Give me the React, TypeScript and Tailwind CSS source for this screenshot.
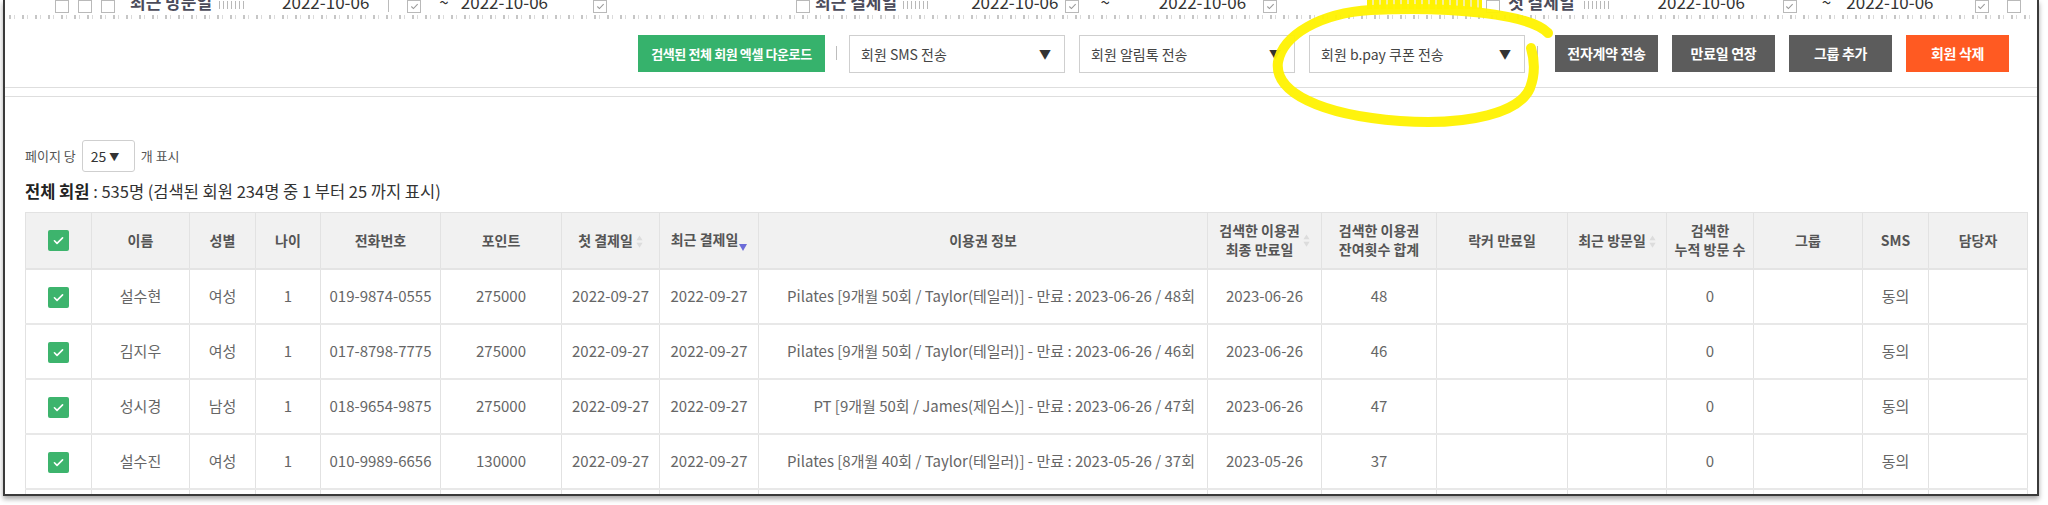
import React from "react";

const FONT = "font-['Noto_Sans_CJK_KR','Noto_Sans',sans-serif]";

function Check() {
  return (
    <span className="inline-flex w-[21px] h-[21px] rounded-[2px] bg-[#3db46d] items-center justify-center align-middle">
      <svg viewBox="0 0 16 16" className="w-[13px] h-[13px]">
        <path d="M3 8.3l3.2 3.2L13 4.7" stroke="white" strokeWidth="2" fill="none" strokeLinecap="round" strokeLinejoin="round" />
      </svg>
    </span>
  );
}

function SortBoth() {
  return (
    <svg viewBox="0 0 8 16" className="inline-block w-[7px] h-[15px] ml-[3px] align-middle">
      <path d="M4 1L7.5 6.5H0.5Z" fill="#dcdcdc" />
      <path d="M4 15L7.5 9.5H0.5Z" fill="#dcdcdc" />
    </svg>
  );
}

function SortDesc() {
  return (
    <svg viewBox="0 0 8 7" className="inline-block w-[8px] h-[7px] ml-[1px] align-[-6px]">
      <path d="M0 0H8L4 7Z" fill="#6b6bd8" />
    </svg>
  );
}

function MiniBox({ ml, check = false }: { ml: string; check?: boolean }) {
  return (
    <div className={`${ml} shrink-0 w-[14px] h-[13px] border border-[#b9b9b9] bg-white flex items-center justify-center`}>
      {check && (
        <svg viewBox="0 0 10 10" className="w-[9px] h-[9px]">
          <path d="M1.5 5l2.3 2.3L8.5 2.3" stroke="#9a9a9a" strokeWidth="1.2" fill="none" />
        </svg>
      )}
    </div>
  );
}

function StripText({ ml, children, bold = false }: { ml: string; children: React.ReactNode; bold?: boolean }) {
  return (
    <div
      className={`${ml} shrink-0 -mt-[8px] h-[20px] leading-[20px] text-[17px] whitespace-nowrap ${
        bold ? "font-bold text-[#4b4b5a]" : "text-[#333]"
      }`}
    >
      {children}
    </div>
  );
}

function Dots({ ml }: { ml: string }) {
  return (
    <div className={`${ml} shrink-0 w-[26px] h-[8px] mt-[1px] bg-[repeating-linear-gradient(90deg,#9a9a9a_0px,#9a9a9a_1px,transparent_1px,transparent_4px)] opacity-70`} />
  );
}

function Strip() {
  return (
    <div className="h-[22px] overflow-hidden flex flex-col">
      <div className="h-[14px] flex items-start">
        <MiniBox ml="ml-[50px]" />
        <MiniBox ml="ml-[9px]" />
        <MiniBox ml="ml-[9px]" />
        <StripText ml="ml-[15px]" bold>최근 방문일</StripText>
        <Dots ml="ml-[7px]" />
        <StripText ml="ml-[37px]">2022-10-06</StripText>
        <div className="ml-[19px] w-[1px] h-[12px] bg-[#bbb]" />
        <MiniBox ml="ml-[18px]" check />
        <StripText ml="ml-[18px]">~</StripText>
        <StripText ml="ml-[12px]">2022-10-06</StripText>
        <MiniBox ml="ml-[45px]" check />
        <MiniBox ml="ml-[189px]" />
        <StripText ml="ml-[5px]" bold>최근 결제일</StripText>
        <Dots ml="ml-[6px]" />
        <StripText ml="ml-[42px]">2022-10-06</StripText>
        <MiniBox ml="ml-[7px]" check />
        <StripText ml="ml-[21px]">~</StripText>
        <StripText ml="ml-[49px]">2022-10-06</StripText>
        <MiniBox ml="ml-[17px]" check />
        <div className="ml-[90px] shrink-0 w-[115px] h-[9px] bg-[repeating-linear-gradient(90deg,#fff200_0px,#fff200_5px,#f6ee9a_5px,#f6ee9a_7px)]" />
        <MiniBox ml="ml-[4px]" />
        <StripText ml="ml-[8px]" bold>첫 결제일</StripText>
        <Dots ml="ml-[9px]" />
        <StripText ml="ml-[48px]">2022-10-06</StripText>
        <MiniBox ml="ml-[38px]" check />
        <StripText ml="ml-[25px]">~</StripText>
        <StripText ml="ml-[15px]">2022-10-06</StripText>
        <MiniBox ml="ml-[41px]" check />
        <MiniBox ml="ml-[18px]" />
      </div>
      <div className="mt-[1px] h-[4px] mx-[4px] bg-[repeating-linear-gradient(90deg,#b8b8b8_0px,#b8b8b8_2px,transparent_2px,transparent_5px,#d2d2d2_5px,#d2d2d2_6px,transparent_6px,transparent_13px)] opacity-80" />
    </div>
  );
}

function SelectBox({ label }: { label: string }) {
  return (
    <div className="w-[216px] h-[38px] border border-[#cfcfcf] bg-white flex items-center justify-between pl-[11px] pr-[13px] text-[14px] text-[#444]">
      <span>{label}</span>
      <span className="text-[12px] text-[#333]">▼</span>
    </div>
  );
}

function DarkBtn({ label }: { label: string }) {
  return (
    <div className="w-[103px] h-[37px] bg-[#5c5c5c] text-white text-[14px] font-bold flex items-center justify-center tracking-[-0.3px]">
      {label}
    </div>
  );
}

function Toolbar() {
  return (
    <div className="h-[66px] border-b border-[#dedede] flex justify-end items-start pt-[13px] pr-[28px]">
      <div className="w-[187px] h-[37px] bg-[#36b26c] text-white text-[13px] font-bold flex items-center justify-center tracking-[-0.4px]">
        검색된 전체 회원 엑셀 다운로드
      </div>
      <div className="ml-[11px] mr-[12px] mt-[11px] w-[1px] h-[14px] bg-[#bdbdbd]" />
      <div className="flex gap-[14px]">
        <SelectBox label="회원 SMS 전송" />
        <SelectBox label="회원 알림톡 전송" />
        <SelectBox label="회원 b.pay 쿠폰 전송" />
      </div>
      <div className="ml-[12px] mr-[17px] mt-[11px] w-[1px] h-[14px] bg-[#bdbdbd]" />
      <div className="flex gap-[14px]">
        <DarkBtn label="전자계약 전송" />
        <DarkBtn label="만료일 연장" />
        <DarkBtn label="그룹 추가" />
        <div className="w-[103px] h-[37px] bg-[#ff5a22] text-white text-[14px] font-bold flex items-center justify-center tracking-[-0.3px]">
          회원 삭제
        </div>
      </div>
    </div>
  );
}

const widths = [66, 98, 66, 65, 120, 121, 98, 99, 449, 114, 115, 131, 99, 87, 109, 66, 99];

type Row = {
  name: string;
  gender: string;
  phone: string;
  point: string;
  ticket: string;
  exp: string;
  remain: string;
};

const rows: Row[] = [
  { name: "설수현", gender: "여성", phone: "019-9874-0555", point: "275000", ticket: "Pilates [9개월 50회 / Taylor(테일러)] - 만료 : 2023-06-26 / 48회", exp: "2023-06-26", remain: "48" },
  { name: "김지우", gender: "여성", phone: "017-8798-7775", point: "275000", ticket: "Pilates [9개월 50회 / Taylor(테일러)] - 만료 : 2023-06-26 / 46회", exp: "2023-06-26", remain: "46" },
  { name: "성시경", gender: "남성", phone: "018-9654-9875", point: "275000", ticket: "PT [9개월 50회 / James(제임스)] - 만료 : 2023-06-26 / 47회", exp: "2023-06-26", remain: "47" },
  { name: "설수진", gender: "여성", phone: "010-9989-6656", point: "130000", ticket: "Pilates [8개월 40회 / Taylor(테일러)] - 만료 : 2023-05-26 / 37회", exp: "2023-05-26", remain: "37" },
  { name: "김민지", gender: "여성", phone: "010-1234-5678", point: "130000", ticket: "Pilates [8개월 40회 / Taylor(테일러)] - 만료 : 2023-05-26 / 37회", exp: "2023-05-26", remain: "37" },
];

function Table() {
  const th = "border border-[#e2e2e2] bg-[#f1f1f1] text-[14px] font-bold text-[#555] leading-[19px] text-center align-middle px-[2px]";
  const td = "border border-[#e2e2e2] h-[55px] text-[15px] text-[#666] text-center align-middle whitespace-nowrap";
  return (
    <table className="table-fixed border-collapse w-[2002px]">
      <colgroup>
        {widths.map((w, i) => (
          <col key={i} style={{ width: w }} />
        ))}
      </colgroup>
      <thead>
        <tr className="h-[56px] border-b-2 border-[#e4e4e4]">
          <th className={th}>
            <Check />
          </th>
          <th className={th}>이름</th>
          <th className={th}>성별</th>
          <th className={th}>나이</th>
          <th className={th}>전화번호</th>
          <th className={th}>포인트</th>
          <th className={th}>
            첫 결제일
            <SortBoth />
          </th>
          <th className={th}>
            최근 결제일
            <SortDesc />
          </th>
          <th className={th}>이용권 정보</th>
          <th className={th}>
            <div className="flex items-center justify-center">
              <div>
                검색한 이용권
                <br />
                최종 만료일
              </div>
              <SortBoth />
            </div>
          </th>
          <th className={th}>
            검색한 이용권
            <br />
            잔여횟수 합계
          </th>
          <th className={th}>락커 만료일</th>
          <th className={th}>
            최근 방문일
            <SortBoth />
          </th>
          <th className={th}>
            검색한
            <br />
            누적 방문 수
          </th>
          <th className={th}>그룹</th>
          <th className={th}>SMS</th>
          <th className={th}>담당자</th>
        </tr>
      </thead>
      <tbody>
        {rows.map((r, i) => (
          <tr key={i} className="border-b-2 border-[#e8e8e8]">
            <td className={td}>
              <Check />
            </td>
            <td className={td}>{r.name}</td>
            <td className={td}>{r.gender}</td>
            <td className={td}>1</td>
            <td className={td}>{r.phone}</td>
            <td className={td}>{r.point}</td>
            <td className={td}>2022-09-27</td>
            <td className={td}>2022-09-27</td>
            <td className={`${td} !text-right pr-[12px]`}>{r.ticket}</td>
            <td className={td}>{r.exp}</td>
            <td className={td}>{r.remain}</td>
            <td className={td}></td>
            <td className={td}></td>
            <td className={td}>0</td>
            <td className={td}></td>
            <td className={td}>동의</td>
            <td className={td}></td>
          </tr>
        ))}
      </tbody>
    </table>
  );
}

function Highlight() {
  return (
    <svg className="absolute left-0 top-0 pointer-events-none" width="2048" height="505" viewBox="0 0 2048 505">
      <path
        d="M1548 33 C1530 14 1450 6 1371 10 C1320 13 1283 35 1278 62 C1274 92 1320 115 1400 121 C1470 126 1520 112 1530 88 C1536 72 1534 58 1531 48"
        stroke="#fff200"
        strokeWidth="10"
        fill="none"
        strokeLinecap="round"
        strokeLinejoin="round"
        opacity="0.95"
      />
    </svg>
  );
}

export default function App() {
  return (
    <div className={`relative w-[2048px] h-[505px] bg-white overflow-hidden ${FONT}`}>
      <div className="ml-[3px] w-[2036px] h-[496px] border-l-2 border-r-2 border-b-2 border-[#3a3a3a] overflow-hidden bg-white shadow-[0_3px_5px_rgba(0,0,0,0.35)]">
        <Strip />
        <Toolbar />
        <div className="h-[8px]" />
        <div className="border-t border-[#dedede] pl-[20px]">
          <div className="mt-[43px] flex items-center text-[13px] text-[#555]">
            <span>페이지 당</span>
            <div className="ml-[6px] w-[53px] h-[32px] border border-[#cfcfcf] rounded-[3px] flex items-center pl-[8px] text-[14px] text-[#333]">
              25 <span className="ml-[3px] text-[10px]">▼</span>
            </div>
            <span className="ml-[6px]">개 표시</span>
          </div>
          <div className="mt-[7px] h-[24px] leading-[24px] text-[16.5px] text-[#333]">
            <span className="font-bold text-[#222]">전체 회원</span> : 535명 (검색된 회원 234명 중 1 부터 25 까지 표시)
          </div>
          <div className="mt-[9px]">
            <Table />
          </div>
        </div>
      </div>
      <Highlight />
    </div>
  );
}
